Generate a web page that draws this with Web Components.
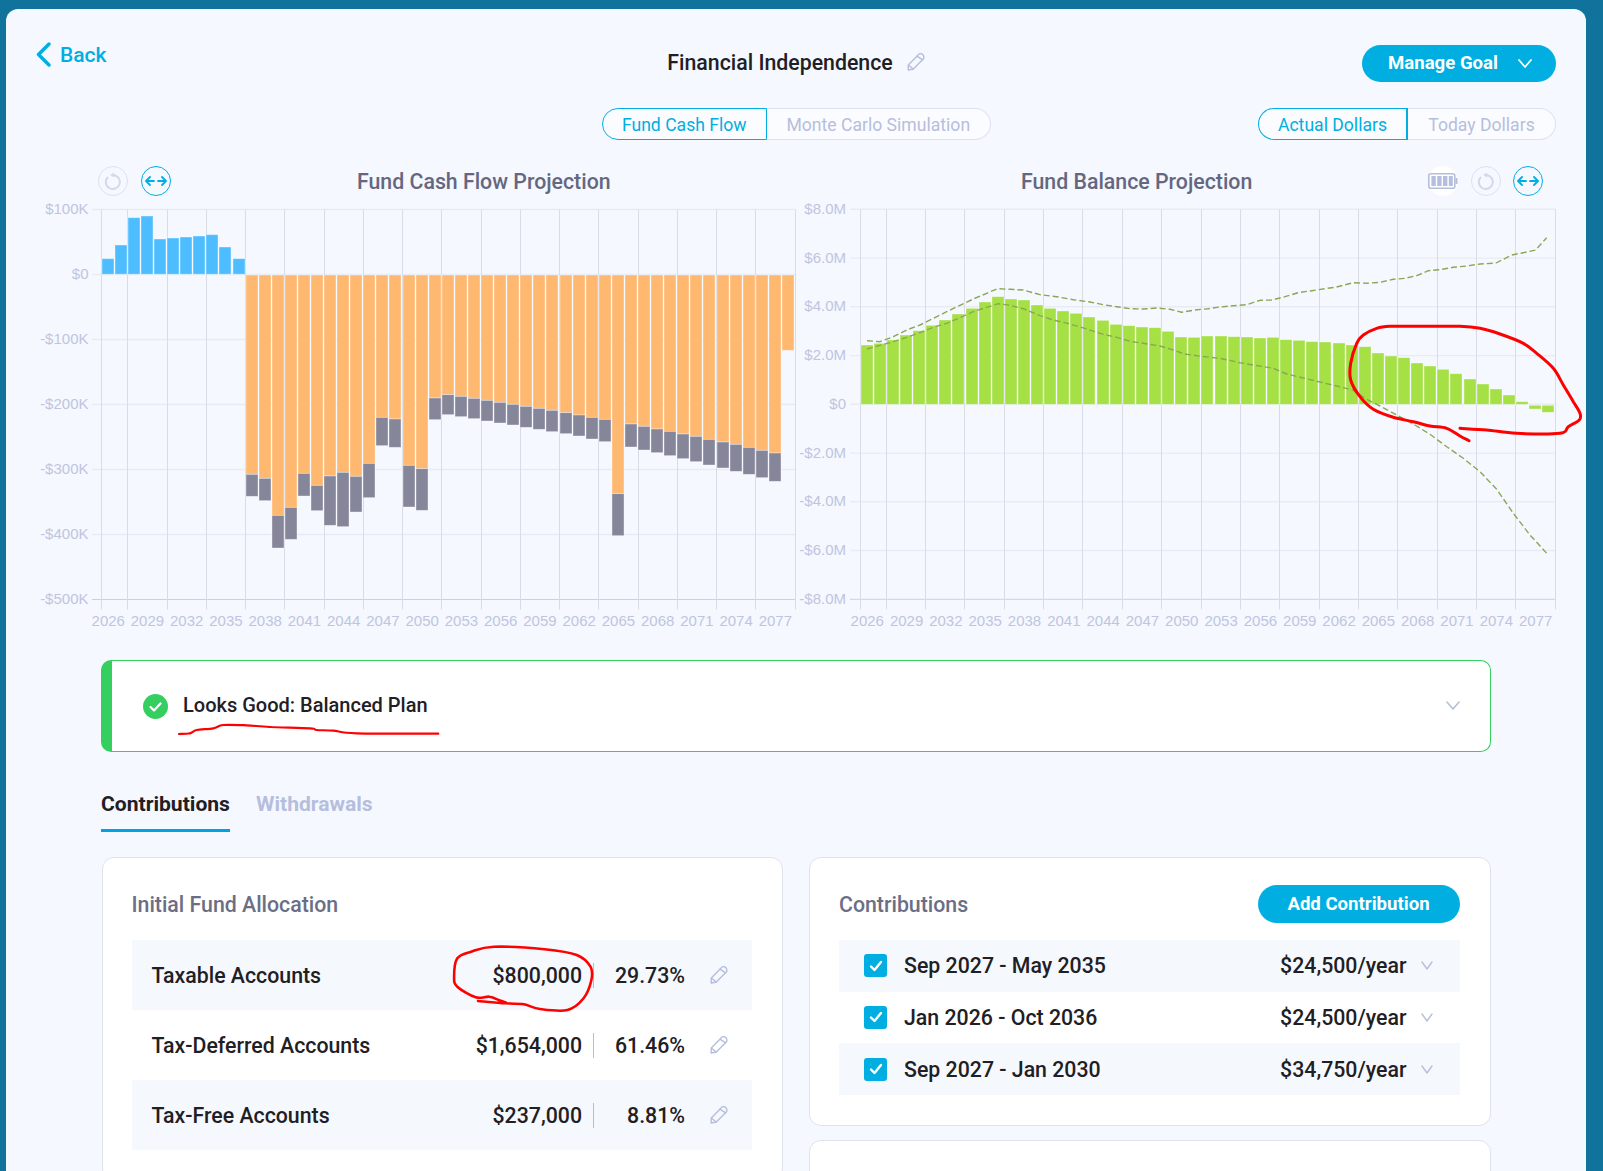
<!DOCTYPE html>
<html lang="en">
<head>
<meta charset="utf-8">
<title>Financial Independence</title>
<style>
  html, body { margin: 0; height: 1171px; overflow: hidden; background: #10739b; }
  body { font-family: Roboto, "Liberation Sans", sans-serif; color: #1f2024; }
</style>
</head>
<body>
<goal-page>
  <page-header>
    <back-link slot="start">Back</back-link>
    <goal-title slot="center">Financial Independence</goal-title>
    <pill-button slot="end" menu style="--w:194px;--h:37px">Manage Goal</pill-button>
  </page-header>
  <page-header style="margin-top:26px">
    <seg-toggle slot="center" a="Fund Cash Flow" b="Monte Carlo Simulation" style="--a:165.5px;--b:223.5px"></seg-toggle>
    <seg-toggle slot="end" a="Actual Dollars" b="Today Dollars" style="--a:150px;--b:148px;--r:2px"></seg-toggle>
  </page-header>
  <chart-row>
    <cash-chart></cash-chart>
    <balance-chart></balance-chart>
  </chart-row>
  <page-content>
    <status-alert>Looks Good: Balanced Plan</status-alert>
    <tab-bar></tab-bar>
    <card-grid>
      <info-card slot="left" heading="Initial Fund Allocation">
        <alloc-row name="Taxable Accounts" amount="$800,000" pct="29.73%" shade></alloc-row>
        <alloc-row name="Tax-Deferred Accounts" amount="$1,654,000" pct="61.46%"></alloc-row>
        <alloc-row name="Tax-Free Accounts" amount="$237,000" pct="8.81%" shade></alloc-row>
      </info-card>
      <info-card slot="right" heading="Contributions" action="Add Contribution">
        <contrib-row range="Sep 2027 - May 2035" value="$24,500/year" shade></contrib-row>
        <contrib-row range="Jan 2026 - Oct 2036" value="$24,500/year"></contrib-row>
        <contrib-row range="Sep 2027 - Jan 2030" value="$34,750/year" shade></contrib-row>
      </info-card>
      <info-card slot="right" style="height:120px"></info-card>
    </card-grid>
  </page-content>
  <ink-notes></ink-notes>
</goal-page>

<script>
const ACCENT = '#00aee1', MUTED = '#b6bedd', LINE = '#dde1f0';
const PENCIL = `<svg width="18" height="18" viewBox="0 0 18 18" fill="none" stroke="${MUTED}" stroke-width="1.4" stroke-linejoin="round" stroke-linecap="round"><path d="M1.2 17 1.3 12 10.9 2.2a3.1 3.1 0 0 1 5.4 3.8L6.3 16z"/><path d="M10 3.2l5.600 3.600M1.500 12.200 6.300 16"/></svg>`;
const chevron = (w, h, c, sw) => `<svg width="${w}" height="${h}" viewBox="0 0 ${w} ${h}" fill="none" stroke="${c}" stroke-width="${sw}" stroke-linecap="round" stroke-linejoin="round"><polyline points="1,1 ${w/2},${h-1} ${w-1},1"/></svg>`;
function el(name, html) {
  customElements.define(name, class extends HTMLElement {
    constructor() {
      super();
      this.attachShadow({ mode: 'open' }).innerHTML = typeof html === 'function' ? '' : html;
    }
    connectedCallback() {
      if (typeof html === 'function') this.shadowRoot.innerHTML = html(this);
    }
  });
}
/* smooth curve through hand-drawn points */
function smooth(p) {
  let d = `M${p[0][0].toFixed(1)} ${p[0][1].toFixed(1)}`;
  for (let i = 0; i < p.length - 1; i++) {
    const a = p[Math.max(i - 1, 0)], b = p[i], c = p[i + 1], e = p[Math.min(i + 2, p.length - 1)];
    const c1 = [b[0] + (c[0] - a[0]) / 6, b[1] + (c[1] - a[1]) / 6], c2 = [c[0] - (e[0] - b[0]) / 6, c[1] - (e[1] - b[1]) / 6];
    d += `C${c1[0].toFixed(1)} ${c1[1].toFixed(1)} ${c2[0].toFixed(1)} ${c2[1].toFixed(1)} ${c[0].toFixed(1)} ${c[1].toFixed(1)}`;
  }
  return d;
}

el('goal-page', `<style>
  :host { display: block; position: relative; box-sizing: border-box; margin: 9px 17px 0 6px; height: 1162px; padding: 36px 30px 0;
    background: #f5f8ff; border-radius: 12px 12px 0 0; overflow: hidden; }
  .decor { position: fixed; left: 0; top: 0; width: 1603px; height: 1171px; z-index: -1; }
</style>
<svg class="decor" viewBox="0 0 1603 1171" fill="none" stroke="#1784b0" aria-hidden="true">
  <path d="M449 9c3-4 6-7 11-9M509 9c-2-4-4-7-7-9" stroke-width="12"/>
  <path d="M1586 826c6-1 12 0 17 2M1586 879c6 2 12 1 17-1" stroke-width="4"/>
</svg>
<slot></slot>`);

el('page-header', `<style>
  :host { display: grid; grid-template-columns: 1fr auto 1fr; align-items: center; }
  .s { justify-self: start; align-self: start; } .e { justify-self: end; }
</style>
<div class="s"><slot name="start"></slot></div><div><slot name="center"></slot></div><div class="e"><slot name="end"></slot></div>`);

el('back-link', `<style>
  :host { display: flex; align-items: center; gap: 9px; height: 25px; margin: -3px 0 0 0; color: ${ACCENT}; font-size: 21px; font-weight: 500; }
  svg { display: block; flex: none; }
</style>
<svg width="15" height="25" viewBox="0 0 15 25" fill="none" stroke="${ACCENT}" stroke-width="3.4" stroke-linecap="round" stroke-linejoin="round"><polyline points="13,2 2.5,12.5 13,23"/></svg><slot></slot>`);

el('goal-title', `<style>
  :host { display: flex; align-items: center; gap: 14px; font-size: 21.3px; font-weight: 500; color: #1f2024; margin-top: -3px; }
  svg { display: block; }
</style><slot></slot>${PENCIL}`);

el('pill-button', h => `<style>
  :host { display: flex; align-items: center; justify-content: ${h.hasAttribute('menu') ? 'flex-start' : 'center'}; box-sizing: border-box;
    width: var(--w); height: var(--h); padding: 0 0 1px ${h.hasAttribute('menu') ? '26px' : '0'};
    border-radius: 19px; background: ${ACCENT}; color: #fff; font-size: 18.6px; font-weight: 700; }
  svg { margin-left: 20px; display: block; }
</style><slot></slot>${h.hasAttribute('menu') ? chevron(14, 9, '#fff', 1.8) : ''}`);

el('seg-toggle', h => `<style>
  :host { display: flex; height: 32px; font-size: 17.6px; }
  div { display: flex; align-items: center; justify-content: center; box-sizing: border-box; padding-top: 1px; }
  .on { width: var(--a); color: ${ACCENT}; border: 1.5px solid ${ACCENT}; border-right-width: var(--r, 1.5px); border-radius: 16px 0 0 16px; background: #fbfcff; }
  .off { width: var(--b); color: ${MUTED}; border: 1.5px solid ${LINE}; border-left: 0; border-radius: 0 16px 16px 0; background: #fbfcff; }
</style><div class="on">${h.getAttribute('a')}</div><div class="off">${h.getAttribute('b')}</div>`);

el('chart-row', `<style>:host { display: grid; grid-template-columns: 764px 756px; margin-top: 26px; }</style><slot></slot>`);

/* ---- shared chart pieces ---- */
const BTN = `<style>
  .btn { width: 30px; height: 30px; box-sizing: border-box; border-radius: 50%; display: flex; align-items: center; justify-content: center; flex: none; }
  .reload { border: 1.5px solid ${LINE}; }
  .wide { border: 1.5px solid ${ACCENT}; }
  .batt { background: #fff; margin-right: 1px; }
  .head { display: flex; align-items: center; height: 30px; }
  .ttl { font-size: 21.3px; font-weight: 500; color: #64677f; white-space: nowrap; }
  svg.plot { display: block; overflow: visible; }
  svg.plot text { font-family: "Liberation Sans", Arial, sans-serif; font-size: 15px; fill: #bfc5e0; }
</style>`;
const RELOAD = `<div class="btn reload"><svg width="18" height="18" viewBox="0 0 18 18" fill="none" stroke="#d3d8ec" stroke-width="2"><path d="M3.9 5A7 7 0 1 0 9 3"/><path d="M6.2 3 10 .6v4.8z" fill="#d3d8ec" stroke="none"/></svg></div>`;
const WIDE = `<div class="btn wide"><svg width="22" height="10" viewBox="0 0 22 10" fill="none" stroke="${ACCENT}" stroke-width="1.8" stroke-linecap="round" stroke-linejoin="round"><path d="M5 1 1 5l4 4M17 1l4 4-4 4M2 5h7M13 5h7"/></svg></div>`;
const BATT = `<div class="btn batt"><svg width="30" height="18" viewBox="0 0 30 18" fill="none"><rect x=".8" y="1.8" width="26" height="14.4" rx="2" stroke="${MUTED}" stroke-width="1.6"/><path d="M27.5 6h2v6h-2z" fill="${MUTED}"/><path d="M3.4 4h4.4v10H3.4zM9.2 4h4.4v10H9.2zM15 4h4.4v10H15zM20.8 4h4v10h-4z" fill="${MUTED}"/></svg></div>`;

function grid({ x0, x1, y0, y1, rows, ticks, catW, labelRight, tickFrom, years }) {
  let s = '';
  rows.forEach(r => {
    s += `<line x1="${tickFrom}" x2="${x1}" y1="${r.y}" y2="${r.y}" stroke="${r.y === y1 ? '#cdd0da' : '#e9ebf4'}" stroke-width="${r.y === y1 ? 1 : 1.4}"/>`;
    s += `<text x="${labelRight}" y="${r.y + 4.4}" text-anchor="end">${r.t}</text>`;
  });
  ticks.forEach(t => { s += `<line x1="${t}" x2="${t}" y1="${y0}" y2="${y1 + 10}" stroke="#dadce5" stroke-width="1"/>`; });
  for (let k = 0; k < years; k++) {
    const i = k * 3;
    s += `<text x="${x0 + (i + .5) * catW}" y="626.4" text-anchor="middle">${2026 + i}</text>`;
  }
  return s;
}
const bar = (x, y, h, fill) => `<rect x="${x}" y="${y}" width="12" height="${h}" fill="${fill}" stroke="#fff" stroke-opacity=".45" stroke-width=".8"/>`;

/* ---- cash flow chart ---- */
el('cash-chart', () => {
  const x0 = 101.7, x1 = 795.5, w = (795 - x0) / 53, zero = 274.6;
  const rows = ['$100K','$0','-$100K','-$200K','-$300K','-$400K','-$500K'].map((t, i) => ({ t, y: +(209.5 + i * 65).toFixed(1) }));
  const ticks = [101.5,127.5,167.5,206.5,245.5,284.5,324.5,363.5,402.5,441.5,481.5,520.5,559.5,598.5,638.5,677.5,716.5,755.5,795.5];
  let s = grid({ x0, x1, y0: 209.5, y1: 599.5, rows, ticks, catW: w, labelRight: 88.5, tickFrom: 92, years: 18 });
  const X = i => Math.round(x0 + i * w);
  [776,735,653,648,717,714,711,708,704,741,776].forEach((v, i) => { const y = v / 3; s += bar(X(i), y, zero - y - .4, '#4dbdff'); });
  const b = [[643,709],[655,722],[766,864],[742,838],[640,708],[676,752],[648,796],[637,800],[649,756],[610,713],[472,557],[477,562],[616,741],[626,751],[414,479],[404,464],[409,470],[415,476],[421,483],[427,489],[433,495],[439,502],[445,508],[451,515],[458,521],[465,528],[472,537],[478,545],[701,827],[492,561],[499,570],[507,578],[514,587],[522,596],[529,605],[538,615],[546,624],[553,634],[562,643],[571,653],[579,664],[271,null]];
  b.forEach(([o, g], k) => {
    const i = 11 + k, oy = 260 + o / 3;
    s += bar(X(i), zero + .4, oy - zero - .4, '#ffb86f');
    if (g) s += bar(X(i), oy, (g - o) / 3, '#858699');
  });
  return `${BTN}<style>:host{display:block;}.head{padding-left:62px;gap:13px}.ttl{margin-left:173px}</style>
  <div class="head">${RELOAD}${WIDE}<div class="ttl">Fund Cash Flow Projection</div></div>
  <svg class="plot" width="764" height="444" viewBox="36 196 764 444">${s}</svg>`;
});

/* ---- balance chart ---- */
el('balance-chart', () => {
  const x0 = 860.7, x1 = 1555.3, w = (x1 - x0) / 53, zero = 404.3;
  const rows = ['$8.0M','$6.0M','$4.0M','$2.0M','$0','-$2.0M','-$4.0M','-$6.0M','-$8.0M'].map((t, i) => ({ t, y: +(209.3 + i * 48.75).toFixed(1) }));
  const ticks = [860.5,886.5,925.5,964.5,1004.5,1043.5,1082.5,1122.5,1161.5,1201.5,1240.5,1279.5,1319.5,1358.5,1397.5,1437.5,1476.5,1515.5,1555.5];
  let s = grid({ x0, x1, y0: 209.3, y1: 599.3, rows, ticks, catW: w, labelRight: 846, tickFrom: 850, years: 18 });
  const X = i => Math.round(x0 + i * w);
  const tops = [435,430,420,405,392,376,360,342,325,306,290,297,300,315,325,333,340,351,361,373,377,381,383,394,411,412,408,408,410,411,414,412,419,421,425,426,429,435,440,459,468,473,489,498,508,521,537,552,567,585,605];
  tops.forEach((v, i) => { const y = 200 + v / 3; s += bar(X(i), y, zero - y, '#a5e045'); });
  s += bar(X(51), zero + 1, 3.7, '#a5e045') + bar(X(52), zero + 1, 7, '#a5e045');
  const P6 = a => a.map(([x, y]) => `${(840 + x / 3).toFixed(1)},${(200 + y / 3).toFixed(1)}`);
  const P7 = a => a.map(([x, y]) => `${(1220 + x / 3).toFixed(1)},${(200 + y / 3).toFixed(1)}`);
  const up = P6([[81,422],[120,425],[160,410],[200,390],[240,375],[280,355],[320,335],[360,316],[400,297],[440,280],[472,266],[510,268],[550,270],[600,284],[650,290],[700,299],[750,306],[790,314],[830,320],[870,326],[910,327],[950,324],[990,328],[1025,337],[1065,330],[1105,326],[1140,321]])
    .concat(P7([[40,317],[80,314],[120,301],[155,300],[195,290],[235,278],[275,272],[315,266],[350,261],[400,248],[440,250],[480,247],[520,238],[555,235],[590,227],[625,212],[660,209],[700,202],[740,198],[780,192],[828,189],[875,165],[910,158],[947,150],[980,113]]));
  const lo = P6([[81,447],[120,436],[160,425],[200,412],[240,398],[280,382],[320,370],[360,353],[400,335],[440,322],[475,311],[510,316],[550,326],[600,347],[640,360],[690,372],[740,387],[790,403],[830,412],[870,424],[910,430],[960,438],[1000,450],[1030,461],[1070,467],[1110,472],[1140,475]])
    .concat(P7([[60,488],[100,495],[160,505],[200,522],[250,534],[300,546],[350,558],[400,571],[440,598],[480,618],[530,645],[580,672],[630,703],[680,740],[730,775],[780,815],[830,868],[880,940],[930,1005],[985,1065]]));
  [up, lo].forEach(p => { s += `<polyline points="${p.join(' ')}" fill="none" stroke="#8aa852" stroke-width="1.4" stroke-dasharray="6 3" stroke-linejoin="round"/>`; });
  return `${BTN}<style>:host{display:block;}.head{gap:12px;padding-right:13px}.ttl{margin-left:221px;margin-right:auto}</style>
  <div class="head"><div class="ttl">Fund Balance Projection</div>${BATT}${RELOAD}${WIDE}</div>
  <svg class="plot" width="756" height="444" viewBox="800 196 756 444">${s}</svg>`;
});

el('page-content', `<style>:host { display: block; margin: 20px 65.5px 0 65px; }</style><slot></slot>`);

el('status-alert', `<style>
  :host { display: flex; align-items: center; box-sizing: border-box; height: 92px; background: #fff; border: 1px solid #34cf5e; border-left: 11px solid #34cf5e;
    border-radius: 10px; padding: 0 30px 0 31px; font-size: 20px; font-weight: 500; color: #1f2024; }
  .ok { width: 25px; height: 25px; margin-right: 15px; flex: none; display: block; }
  .sp { flex: 1; }
  .tx { padding-bottom: 2px; }
  .chv { display: flex; padding-bottom: 2px; }
</style>
<svg class="ok" viewBox="0 0 25 25"><circle cx="12.5" cy="12.5" r="12.5" fill="#34cf5e"/><polyline points="7.5,13 11,16.5 17.5,9.5" fill="none" stroke="#fff" stroke-width="2.2" stroke-linecap="round" stroke-linejoin="round"/></svg>
<span class="tx"><slot></slot></span><span class="sp"></span><span class="chv">${chevron(14, 9, MUTED, 1.6)}</span>`);

el('tab-bar', `<style>
  :host { display: flex; gap: 26px; margin-top: 36px; font-size: 21.1px; font-weight: 700; }
  div { line-height: 32px; padding-bottom: 9px; border-bottom: 3px solid transparent; color: ${MUTED}; }
  .on { color: #1f2024; border-bottom-color: #00a3e0; }
</style><div class="on">Contributions</div><div>Withdrawals</div>`);

el('card-grid', `<style>
  :host { display: grid; grid-template-columns: 1fr 1fr; gap: 26px; margin: 25px 0 0 .5px; align-items: start; }
  .col { display: flex; flex-direction: column; gap: 14px; }
</style><div class="col"><slot name="left"></slot></div><div class="col"><slot name="right"></slot></div>`);

el('info-card', h => {
  const title = h.getAttribute('heading'), act = h.getAttribute('action');
  return `<style>
    :host { display: block; box-sizing: border-box; background: #fff; border: 1px solid #dfe3f0; border-radius: 12px; padding: 27px 30px 30px 29px; }
    .top { display: flex; align-items: center; justify-content: space-between; height: 38px; margin-bottom: 17px; }
    .t { font-size: 21.3px; font-weight: 500; color: #6b6e85; }
  </style>${title ? `<div class="top"><div class="t">${title}</div>${act ? `<pill-button style="--w:202px;--h:38px">${act}</pill-button>` : ''}</div>` : ''}<slot></slot>`;
});

el('alloc-row', h => `<style>
  :host { display: flex; align-items: center; height: 70px; padding: 0 24px 0 20px; font-size: 21.3px; font-weight: 500; color: #1f2024; background: ${h.hasAttribute('shade') ? '#f5f9fe' : 'transparent'}; }
  .n { flex: 1; }
  .d { width: 1px; height: 25px; background: #b6bcd2; margin: 0 0 0 11px; }
  .p { width: 91px; text-align: right; margin-right: 25px; }
  svg { display: block; }
</style><span class="n">${h.getAttribute('name')}</span><span>${h.getAttribute('amount')}</span><span class="d"></span><span class="p">${h.getAttribute('pct')}</span>${PENCIL}`);

el('contrib-row', h => `<style>
  :host { display: flex; align-items: center; height: 51.67px; padding: 0 27px 0 25px; font-size: 21.3px; font-weight: 500; color: #1f2024; background: ${h.hasAttribute('shade') ? '#f5f9fe' : 'transparent'}; }
  .c { width: 23px; height: 23px; border-radius: 3px; background: ${ACCENT}; display: flex; align-items: center; justify-content: center; margin-right: 17px; }
  .n { flex: 1; }
  .v { margin-right: 14px; }
  svg { display: block; }
</style><span class="c"><svg width="14" height="12" viewBox="0 0 14 12" fill="none" stroke="#fff" stroke-width="2.4" stroke-linecap="round" stroke-linejoin="round"><polyline points="2,6.5 5.5,10 12,2"/></svg></span>
<span class="n">${h.getAttribute('range')}</span><span class="v">${h.getAttribute('value')}</span>${chevron(12, 9, MUTED, 1.4)}`);

/* hand-drawn red annotations that lie over the page */
el('ink-notes', () => {
  const z7 = [[747,722],[720,708],[680,685],[630,678],[580,665],[520,652],[460,628],[420,590],[392,540],[392,490],[410,430],[430,405],[470,385],[510,379],[600,379],[720,379],[780,385],[840,402],[910,430],[950,460],[1000,505],[1030,555],[1060,605],[1080,640],[1078,660],[1045,680],[1020,700],[890,700],[800,690],[720,685]].map(([x, y]) => [1220 + x / 3, 200 + y / 3]);
  const z8 = [[297,282],[330,280],[350,270],[400,265],[430,255],[500,256],[570,261],[690,265],[710,270],[760,272],[830,280],[1075,281]].map(([x, y]) => [80 + x / 3, 640 + y / 3]);
  const z9 = [[845,453],[905,460],[890,450],[870,440],[840,442],[800,410],[793,380],[800,325],[830,305],[880,290],[990,298],[1060,315],[1090,350],[1092,390],[1075,445],[1040,480],[980,477],[945,463],[905,460]].map(([x, y]) => [90 + x / 2.178, 850 + y / 3]);
  return `<style>:host { position: absolute; left: 0; top: 0; width: 1580px; height: 1162px; pointer-events: none; } svg { display: block; }</style>
  <svg width="1580" height="1162" viewBox="6 9 1580 1162" fill="none" stroke="#f00" stroke-linecap="round" stroke-linejoin="round">
    <path d="${smooth(z7)}" stroke-width="3"/><path d="${smooth(z8)}" stroke-width="2.2"/><path d="${smooth(z9)}" stroke-width="2.6"/>
  </svg>`;
});
</script>
</body>
</html>
